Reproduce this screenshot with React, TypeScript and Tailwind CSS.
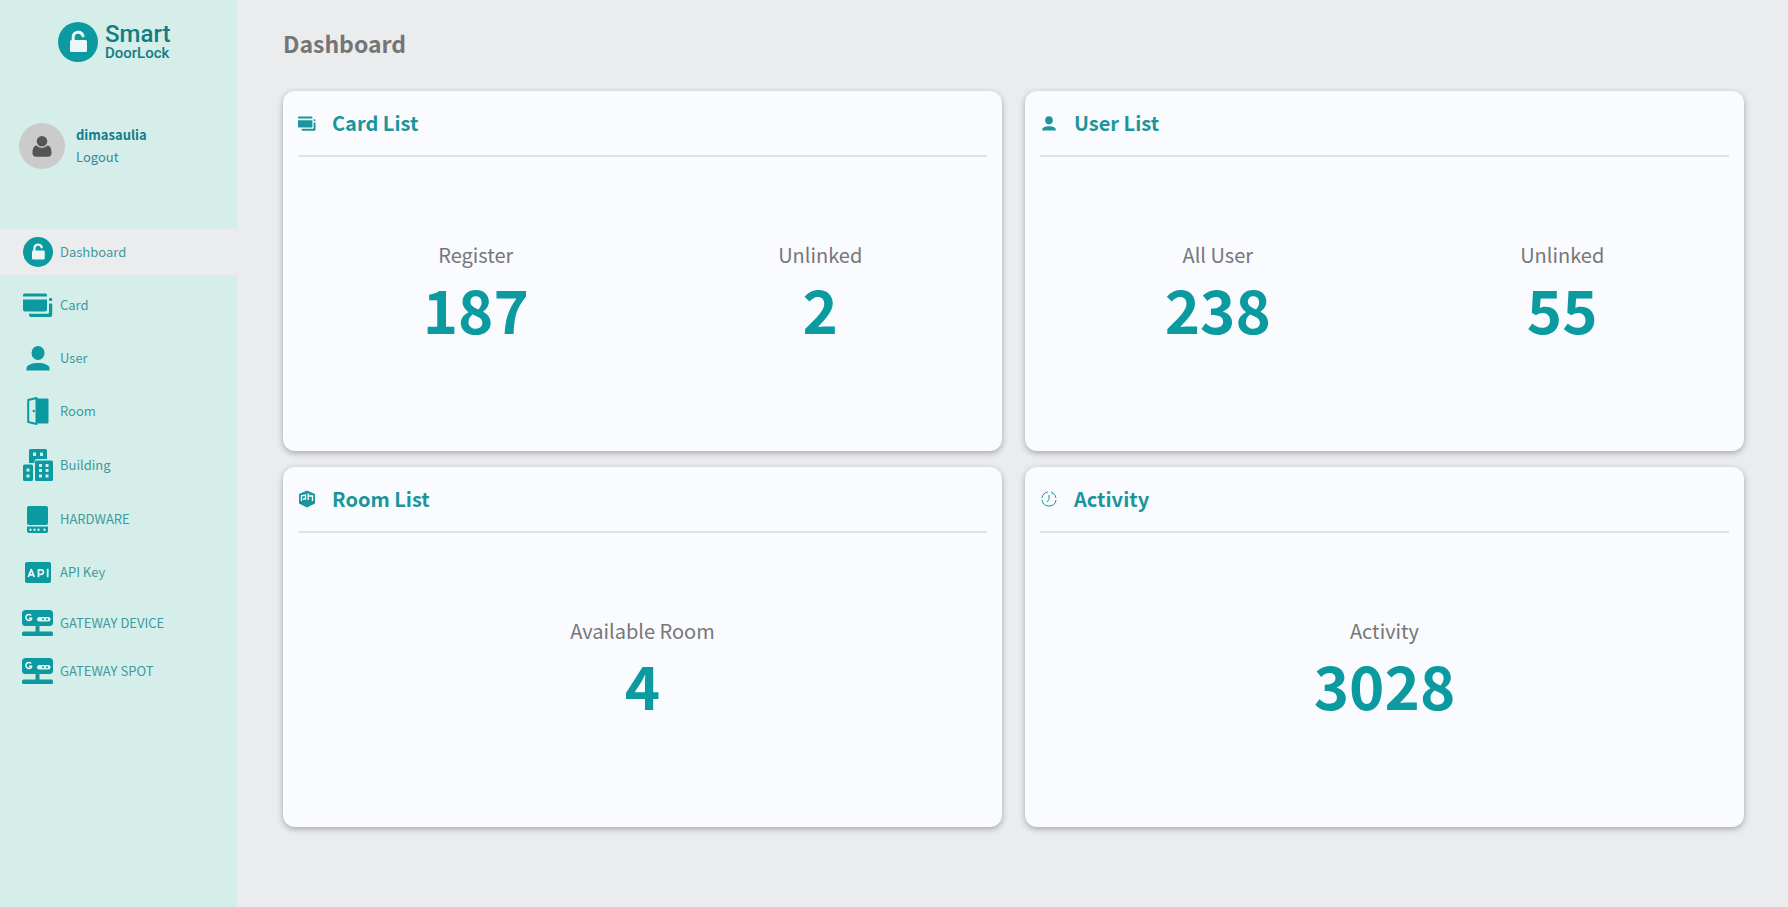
import type { ReactNode } from "react";

function LockIcon({ className }: { className: string }) {
  return (
    <svg viewBox="0 0 40 40" className={className} aria-hidden="true">
      <circle cx="20" cy="20" r="20" fill="#0a9aa0" />
      <rect x="12" y="18" width="17" height="12" rx="1.5" fill="#eaf7f6" />
      <path d="M15.2 19v-4a5 5 0 0 1 9.800-1.200" fill="none" stroke="#eaf7f6" strokeWidth="3" strokeLinecap="round" />
    </svg>
  );
}

function CardIcon({ className }: { className: string }) {
  return (
    <svg viewBox="0 0 30 24" className={className} fill="currentColor" aria-hidden="true">
      <path d="M1.500 .5h21a1.500 1.500 0 0 1 1.500 1.500v1.500H0V2A1.500 1.500 0 0 1 1.500.500z" />
      <path d="M0 6.500h24v10a2 2 0 0 1-2 2H2a2 2 0 0 1-2-2z" />
      <rect x="26" y="5" width="3.200" height="3" rx="1" />
      <path d="M26 10.500h3.200V22a2 2 0 0 1-2 2H8a2 2 0 0 1-2-2v-1.200h18.500a1.500 1.500 0 0 0 1.500-1.500z" />
    </svg>
  );
}

function UserIcon({ className }: { className: string }) {
  return (
    <svg viewBox="0 0 24 25" className={className} fill="currentColor" aria-hidden="true">
      <ellipse cx="12" cy="7" rx="6.500" ry="7" />
      <path d="M.5 24.500v-2.200C.5 19 6 17 12 17s11.500 2 11.500 5.300v2.200z" />
    </svg>
  );
}

function DoorIcon({ className }: { className: string }) {
  return (
    <svg viewBox="0 0 22 28" className={className} fill="currentColor" aria-hidden="true">
      <path d="M9.500 1.500h11a1 1 0 0 1 1 1v23a1 1 0 0 1-1 1h-11z" />
      <path d="M1.200 3 9.500 1v26l-8.300-2z" fill="none" stroke="currentColor" strokeWidth="2" strokeLinejoin="round" />
      <circle cx="6.800" cy="14" r="1.200" />
    </svg>
  );
}

function BuildingIcon({ className }: { className: string }) {
  return (
    <svg viewBox="0 0 30 32" className={className} aria-hidden="true">
      <g fill="currentColor">
        <path d="M7.500 0h15A1.500 1.500 0 0 1 24 1.500V10h-9.500a3 3 0 0 0-3 3v1H6V1.500A1.500 1.500 0 0 1 7.500 0z" />
        <rect x="0" y="15.500" width="10" height="16.500" rx="1.500" />
        <rect x="12" y="11.500" width="18" height="20.500" rx="1.500" />
      </g>
      <g fill="#d5eeea">
        <rect x="10" y="3.500" width="3" height="3.500" />
        <rect x="17" y="3.500" width="3" height="3.500" />
        <rect x="3.500" y="19.500" width="3" height="3" />
        <rect x="3.500" y="25.500" width="3" height="3" />
        <rect x="16" y="15" width="3" height="3" />
        <rect x="22.500" y="15" width="3" height="3" />
        <rect x="16" y="20" width="3" height="3" />
        <rect x="22.500" y="20" width="3" height="3" />
        <rect x="16" y="25.500" width="3" height="3" />
        <rect x="22.500" y="25.500" width="3" height="3" />
      </g>
    </svg>
  );
}

function HardwareIcon({ className }: { className: string }) {
  return (
    <svg viewBox="0 0 21 27" className={className} aria-hidden="true">
      <rect width="21" height="19" rx="2" fill="currentColor" />
      <path d="M0 20.500h21V25a2 2 0 0 1-2 2H2a2 2 0 0 1-2-2z" fill="currentColor" />
      <g fill="#d5eeea">
        <circle cx="3.500" cy="23.700" r="1.200" />
        <circle cx="7.500" cy="23.700" r="1.200" />
        <circle cx="11.500" cy="23.700" r="1.200" />
        <circle cx="17.500" cy="23.700" r="1.200" />
      </g>
    </svg>
  );
}

function ApiIcon({ className }: { className: string }) {
  return (
    <svg viewBox="0 0 26 21" className={className} aria-hidden="true">
      <rect width="26" height="21" rx="2" fill="currentColor" />
      <g fill="none" stroke="#e6f6f4" strokeWidth="1.800" strokeLinejoin="round">
        <path d="M3.300 15 6.300 7.500 9.300 15M4.400 12.800h3.800" />
        <path d="M13.500 15.200V7.800h2.600a2.200 2.200 0 0 1 0 4.500h-2.600" />
        <path d="M22.700 6.800v8.400" />
      </g>
    </svg>
  );
}

function GatewayIcon({ className }: { className: string }) {
  return (
    <svg viewBox="0 0 31 26" className={className} aria-hidden="true">
      <g fill="currentColor">
        <rect width="31" height="16" rx="3.500" />
        <rect x="13.500" y="15" width="4" height="7" />
        <rect y="21.500" width="31" height="4.500" rx="1.500" />
      </g>
      <path d="M9.200 5.500A3 3 0 1 0 9.500 9v-.8H7" fill="none" stroke="#e6f6f4" strokeWidth="1.600" />
      <rect x="15" y="7" width="13.500" height="4.500" rx="2.200" fill="#e6f6f4" />
      <g fill="#0a9aa0">
        <circle cx="21" cy="9.200" r="1" />
        <circle cx="25" cy="9.200" r="1" />
      </g>
    </svg>
  );
}

function RoomBadgeIcon({ className }: { className: string }) {
  return (
    <svg viewBox="0 0 18 18" className={className} aria-hidden="true">
      <path d="M9 .5 17 4v9.500L9 17.500 1 13.500V4z" fill="currentColor" />
      <path d="M3.500 11V5.800L7.500 5v3.800l-2.500.4M10.200 3.500V10M10.200 6h4.300v5" fill="none" stroke="#fafbff" strokeWidth="1.400" />
    </svg>
  );
}

function ClockIcon({ className }: { className: string }) {
  return (
    <svg viewBox="0 0 18 18" className={className} fill="none" stroke="currentColor" strokeWidth="1" aria-hidden="true">
      <path d="M8 2A7 7 0 0 0 2 8M2 9.800A7 7 0 0 0 8 16M10 16a7 7 0 0 0 6-6M16 8a7 7 0 0 0-3-4.800M9 5v4.500L7 12M11.500 1.500l1 1.500-.8 1.200M9 15v2" />
    </svg>
  );
}

type NavItem = { label: string; row: string; icon: ReactNode; active?: boolean };

const navItems: NavItem[] = [
  { label: "Dashboard", row: "h-[46px]", icon: <LockIcon className="size-[30px]" />, active: true },
  { label: "Card", row: "h-[46px]", icon: <CardIcon className="h-6 w-[30px]" /> },
  { label: "User", row: "h-[46px]", icon: <UserIcon className="h-[25px] w-6" /> },
  { label: "Room", row: "h-[46px]", icon: <DoorIcon className="h-7 w-[22px]" /> },
  { label: "Building", row: "h-12", icon: <BuildingIcon className="h-8 w-[30px]" /> },
  { label: "HARDWARE", row: "h-[46px]", icon: <HardwareIcon className="h-[27px] w-[21px]" /> },
  { label: "API Key", row: "h-[46px]", icon: <ApiIcon className="h-[21px] w-[26px]" /> },
  { label: "GATEWAY DEVICE", row: "h-[41px]", icon: <GatewayIcon className="h-[26px] w-[31px]" /> },
  { label: "GATEWAY SPOT", row: "h-[41px]", icon: <GatewayIcon className="h-[26px] w-[31px]" /> },
];

type Panel = { title: string; icon: ReactNode; stats: { label: string; value: number }[] };

const panels: Panel[] = [
  {
    title: "Card List",
    icon: <CardIcon className="h-[15px] w-[18px]" />,
    stats: [{ label: "Register", value: 187 }, { label: "Unlinked", value: 2 }],
  },
  {
    title: "User List",
    icon: <UserIcon className="h-[15px] w-[14px]" />,
    stats: [{ label: "All User", value: 238 }, { label: "Unlinked", value: 55 }],
  },
  {
    title: "Room List",
    icon: <RoomBadgeIcon className="size-[18px]" />,
    stats: [{ label: "Available Room", value: 4 }],
  },
  {
    title: "Activity",
    icon: <ClockIcon className="size-[18px]" />,
    stats: [{ label: "Activity", value: 3028 }],
  },
];

function Sidebar() {
  return (
    <aside className="w-[237px] shrink-0 bg-[#d5eeea]">
      <a href="#" className="flex h-[84px] items-center gap-[7px] pl-[58px] text-[#137c82]">
        <LockIcon className="size-10" />
        <span className="flex flex-col font-['Roboto',sans-serif] font-medium">
          <span className="text-2xl leading-[22px]">Smart</span>
          <span className="text-[15px] leading-4">DoorLock</span>
        </span>
      </a>
      <div className="mt-[39px] flex items-center gap-[11px] pl-[19px]">
        <div className="flex size-[46px] items-center justify-center rounded-full bg-[#cbcbcb]">
          <svg viewBox="0 0 20 21" className="h-[21px] w-5" fill="#555" aria-hidden="true">
            <path d="M4.500 9.500C1.500 10 .5 13 .5 17c0 2.500 1.500 3.800 3.500 3.800h12c2 0 3.500-1.300 3.500-3.800 0-4-1-7-4-7.500a7.500 7.500 0 0 1-11 0z" />
            <circle cx="10" cy="5.300" r="5.300" />
          </svg>
        </div>
        <div className="flex flex-col items-start text-[13px] leading-[22px]">
          <span className="font-bold text-[#137c88]">dimasaulia</span>
          <button type="button" className="text-[#3a8a8f]">Logout</button>
        </div>
      </div>
      <nav className="mt-[60px] flex flex-col gap-[7px]">
        {navItems.map((item) => (
          <a
            key={item.label}
            href="#"
            aria-current={item.active ? "page" : undefined}
            className={`flex items-center gap-[7px] pl-[22px] text-[13px] text-[#0a9aa0] ${item.row} ${item.active ? "bg-[#ebecee]" : ""}`}
          >
            <span className="flex w-[31px] justify-center">{item.icon}</span>
            <span className="text-[#3d9a9c]">{item.label}</span>
          </a>
        ))}
      </nav>
    </aside>
  );
}

function StatPanel({ title, icon, stats }: Panel) {
  return (
    <section className="flex min-h-[360px] flex-col rounded-xl bg-[#fafbff] px-[15px] shadow-[0_2px_6px_rgba(0,0,0,0.3)]">
      <header className="flex h-[66px] items-center gap-4 border-b-2 border-[#dfe1e5] text-[#1b959c]">
        <span className="flex w-[18px] justify-center">{icon}</span>
        <h2 className="text-xl leading-7 font-bold">{title}</h2>
      </header>
      <dl className="flex flex-1 items-center justify-around pb-5">
        {stats.map((stat) => (
          <div key={stat.label} className="flex flex-col items-center">
            <dt className="text-xl leading-7 text-[#777]">{stat.label}</dt>
            <dd className="text-[60px] leading-[78px] font-bold text-[#0a9aa0]">{stat.value}</dd>
          </div>
        ))}
      </dl>
    </section>
  );
}

export default function App() {
  return (
    <div className="flex min-h-screen bg-[#ebecee] font-['Noto_Sans_CJK_JP',sans-serif]">
      <Sidebar />
      <main className="flex-1 pr-11 pb-12 pl-[46px]">
        <h1 className="flex h-[91px] items-center pb-1 text-[23px] font-bold text-[#757575]">Dashboard</h1>
        <div className="grid grid-cols-2 gap-x-[23px] gap-y-4">
          {panels.map((panel) => (
            <StatPanel key={panel.title} {...panel} />
          ))}
        </div>
      </main>
    </div>
  );
}
